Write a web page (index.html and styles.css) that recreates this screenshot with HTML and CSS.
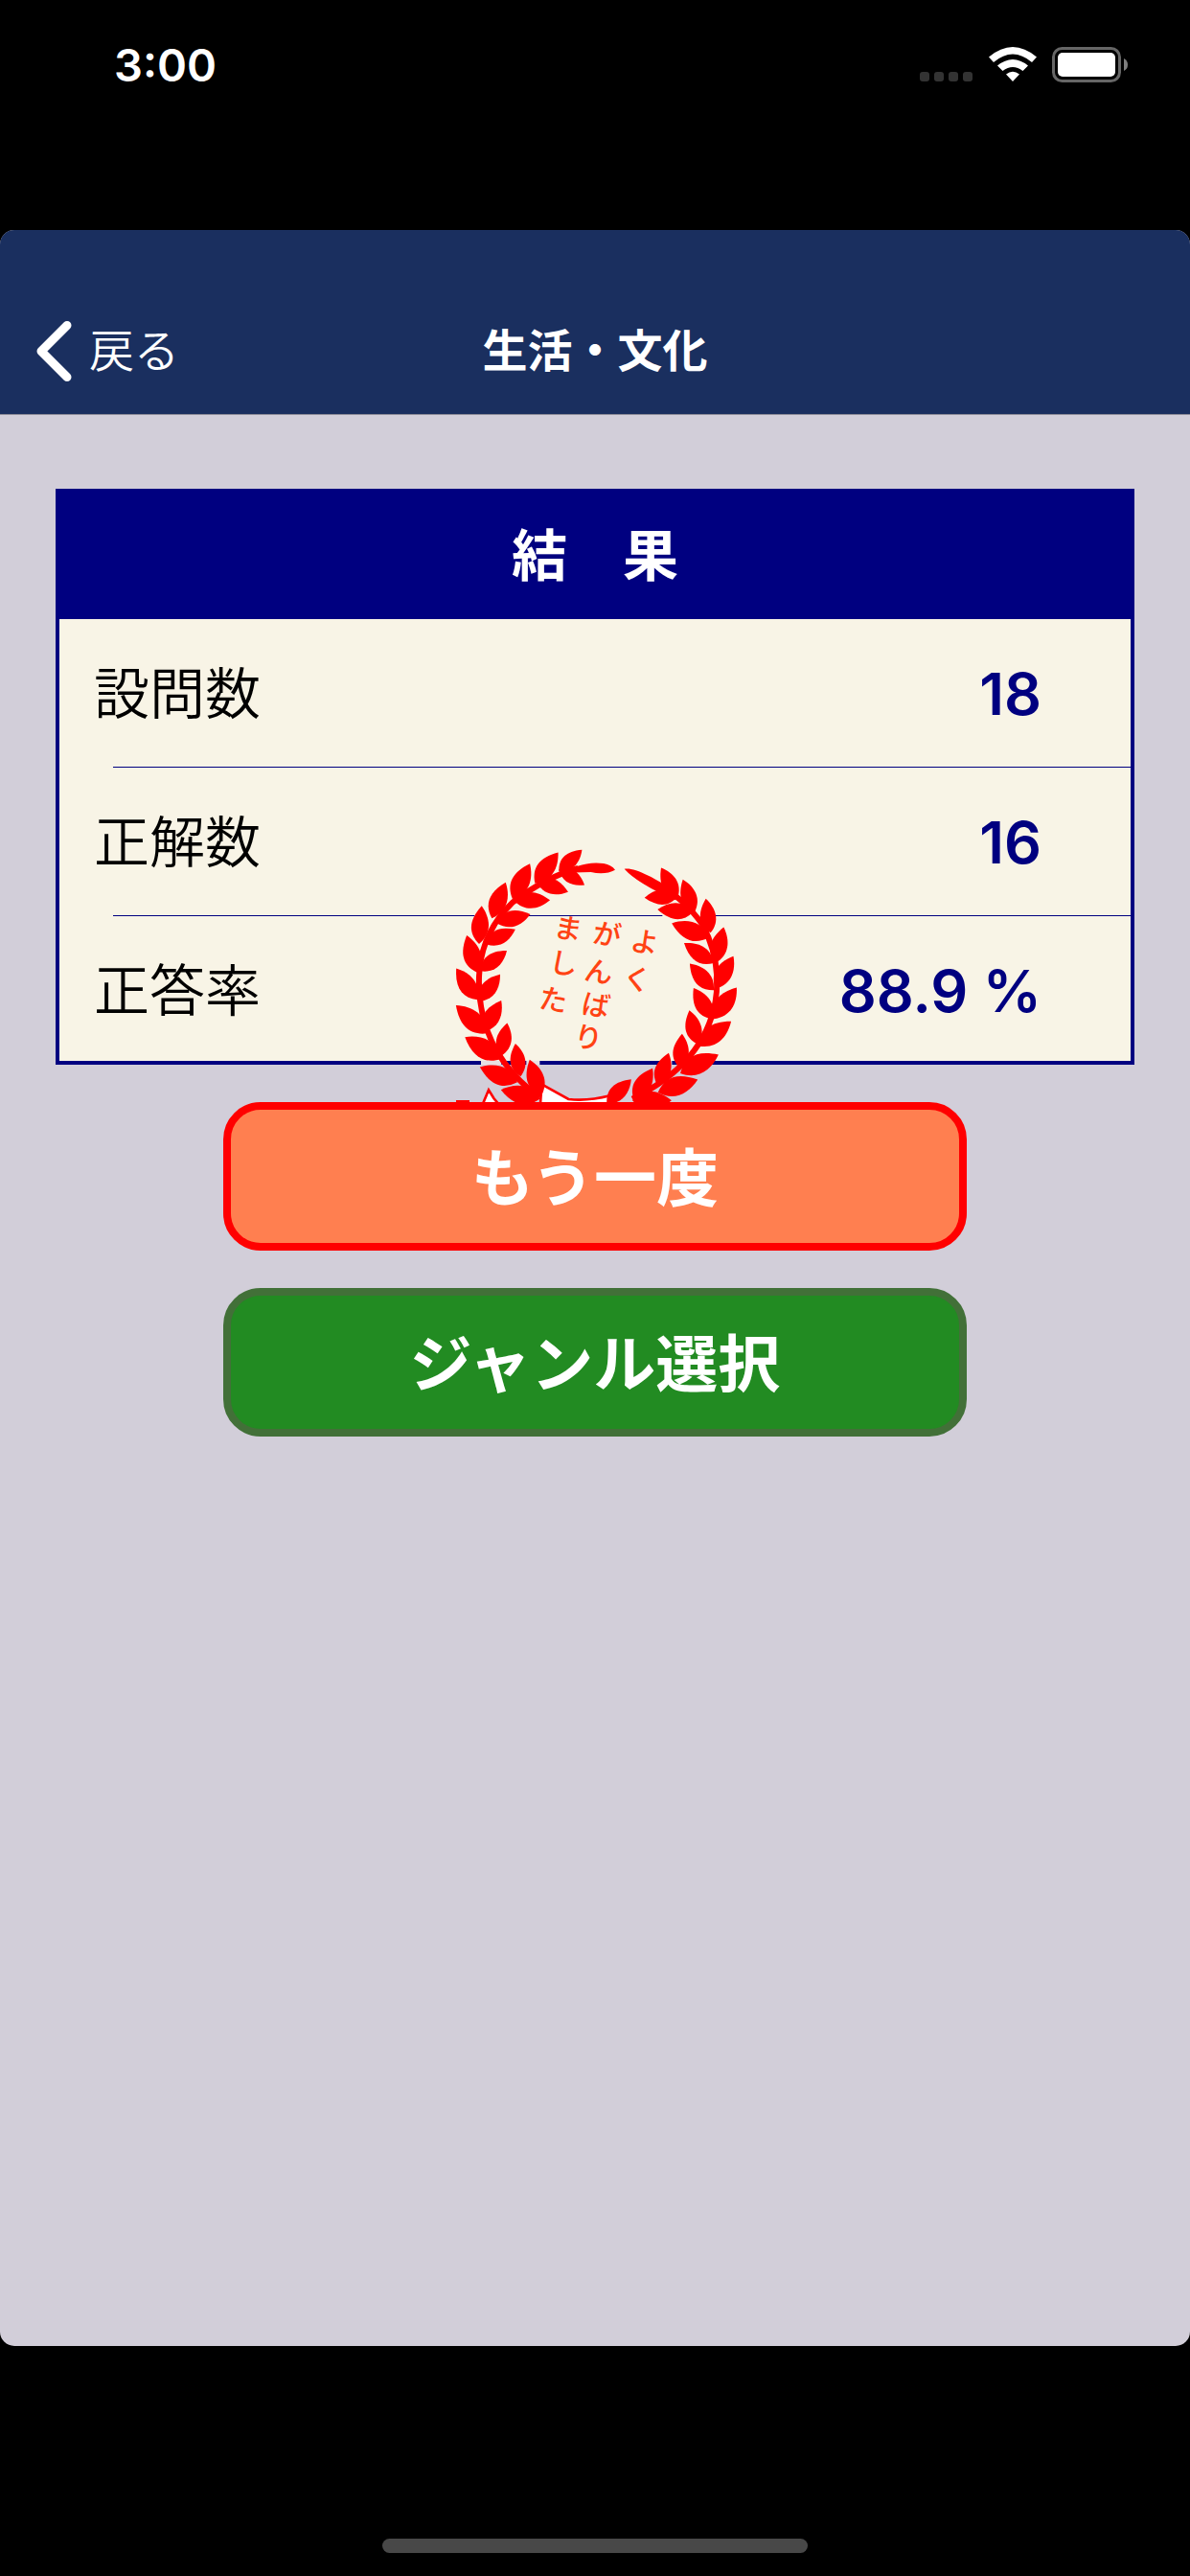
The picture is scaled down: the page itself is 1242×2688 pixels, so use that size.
FILE: index.html
```html
<!DOCTYPE html>
<html lang="ja">
<head>
<meta charset="utf-8">
<meta name="viewport" content="width=device-width, initial-scale=1">
<title>生活・文化</title>
<link rel="stylesheet" href="styles.css">
</head>
<body>
<div class="status">
  <time class="clock">3:00</time>
  <div class="indicators">
    <svg class="signal" width="56" height="11" viewBox="0 0 56 11" aria-hidden="true"><rect width="10" height="10" rx="3"/><rect x="15" width="10" height="10" rx="3"/><rect x="30" width="10" height="10" rx="3"/><rect x="45" width="10" height="10" rx="3"/></svg>
    <svg class="wifi" width="50" height="37" viewBox="0 0 50 37" aria-hidden="true"><path d="M0 10.500Q25-10.500 50 10.500L45 16Q25-1 5 16ZM9 19.500Q25 6.500 41 19.500L35.500 25Q25 17 14.500 25ZM18 28.500Q25 23 32 28.500L25 36Z"/></svg>
    <svg class="battery" width="80" height="37" viewBox="0 0 80 37" aria-hidden="true"><rect class="shell" x="1.500" y="1.500" width="69" height="34" rx="9"/><rect class="charge" x="6" y="6" width="60" height="25" rx="5"/><path class="nub" d="M75 12Q79 14 79 18.500T75 25Z"/></svg>
  </div>
</div>
<div class="app">
  <header class="nav">
    <a class="back" href="#"><svg width="37" height="63" viewBox="0 0 37 63" aria-hidden="true"><path d="M32 4.500L5 31.500L32 58.500"/></svg>戻る</a>
    <h1 class="title">生活・文化</h1>
  </header>
  <main class="content">
    <div class="result">
      <table class="scores">
        <thead><tr><th colspan="2">結　果</th></tr></thead>
        <tbody>
          <tr><th scope="row">設問数</th><td>18</td></tr>
          <tr><th scope="row">正解数</th><td>16</td></tr>
          <tr><th scope="row">正答率</th><td>88.9 %</td></tr>
        </tbody>
      </table>
      <svg class="stamp" width="300" height="265" viewBox="33 45 900 795" role="img" aria-label="よくがんばりました">
        <defs><path id="leaf" d="M0 0C-32-28-33-62 0-104C26-72 34-32 0 0Z"/></defs>
        <path class="gap" d="M106 256H276M694 256H860"/>
        <path class="gap-wide" d="M126 717H190M268 717H310M690 717H724"/>
        <path class="ribbon" d="M316 784L400 831Q460 838 530 820L530 845H312ZM132 845L150 802L166 828L180 845M48 838H90"/>
        <g class="halo">
          <path class="twig" d="M430 108Q330 135 225 215Q115 320 120 475Q125 690 310 825"/>
          <path class="twig" d="M680 160Q760 200 820 285Q880 400 860 525Q825 720 600 830"/>
          <path d="M390 122C410 105 460 85 510 93Q535 98 546 113Q515 130 470 120ZM575 110C605 104 670 138 735 180L735 208Q615 155 575 110Z"/>
          <g>
            <use href="#leaf" transform="translate(370 118) rotate(47) scale(.95)"/>
            <use href="#leaf" transform="translate(295 155) rotate(37) scale(1.160)"/>
            <use href="#leaf" transform="translate(225 205) rotate(26) scale(1.190)"/>
            <use href="#leaf" transform="translate(160 265) rotate(21) scale(1.160)"/>
            <use href="#leaf" transform="translate(120 345) rotate(4) scale(1.150)"/>
            <use href="#leaf" transform="translate(115 435) rotate(-16) scale(1.170)"/>
            <use href="#leaf" transform="translate(115 520) rotate(-34) scale(1.140)"/>
            <use href="#leaf" transform="translate(145 625) rotate(-48) scale(1.260)"/>
            <use href="#leaf" transform="translate(190 705) rotate(-59) scale(1.280)"/>
            <use href="#leaf" transform="translate(240 778) rotate(-68) scale(1.220)"/>
            <use href="#leaf" transform="translate(310 830) rotate(-77) scale(1.200)"/>
            <use href="#leaf" transform="translate(370 112) rotate(121) scale(.9)"/>
            <use href="#leaf" transform="translate(300 150) rotate(108)"/>
            <use href="#leaf" transform="translate(230 210) rotate(89) scale(1.080)"/>
            <use href="#leaf" transform="translate(175 280) rotate(75) scale(1.050)"/>
            <use href="#leaf" transform="translate(140 345) rotate(64)"/>
            <use href="#leaf" transform="translate(125 430) rotate(52)"/>
            <use href="#leaf" transform="translate(120 525) rotate(38) scale(1.030)"/>
            <use href="#leaf" transform="translate(135 620) rotate(29) scale(1.080)"/>
            <use href="#leaf" transform="translate(190 695) rotate(10)"/>
            <use href="#leaf" transform="translate(250 760) rotate(-9)"/>
            <use href="#leaf" transform="translate(315 820) rotate(-18) scale(1.140)"/>
          </g>
          <g>
            <use href="#leaf" transform="translate(742 200) rotate(-29) scale(1.030)"/>
            <use href="#leaf" transform="translate(795 245) rotate(-20) scale(1.040)"/>
            <use href="#leaf" transform="translate(845 310) rotate(-8) scale(1.040)"/>
            <use href="#leaf" transform="translate(860 405) rotate(13) scale(1.110)"/>
            <use href="#leaf" transform="translate(860 485) rotate(29) scale(1.120)"/>
            <use href="#leaf" transform="translate(855 580) rotate(36) scale(1.170)"/>
            <use href="#leaf" transform="translate(810 665) rotate(52) scale(1.210)"/>
            <use href="#leaf" transform="translate(750 750) rotate(64) scale(1.280)"/>
            <use href="#leaf" transform="translate(680 810) rotate(72) scale(1.260)"/>
            <use href="#leaf" transform="translate(600 835) rotate(90) scale(1.180)"/>
            <use href="#leaf" transform="translate(742 195) rotate(-93)"/>
            <use href="#leaf" transform="translate(790 245) rotate(-86) scale(1.070)"/>
            <use href="#leaf" transform="translate(840 325) rotate(-69) scale(1.200)"/>
            <use href="#leaf" transform="translate(855 405) rotate(-56) scale(1.080)"/>
            <use href="#leaf" transform="translate(855 490) rotate(-42) scale(1.080)"/>
            <use href="#leaf" transform="translate(850 580) rotate(-31) scale(1.090)"/>
            <use href="#leaf" transform="translate(805 660) rotate(-14) scale(1.060)"/>
            <use href="#leaf" transform="translate(750 735) rotate(3) scale(1.050)"/>
            <use href="#leaf" transform="translate(680 790) rotate(18) scale(1.050)"/>
            <use href="#leaf" transform="translate(605 835) rotate(30) scale(1.120)"/>
            <use href="#leaf" transform="translate(520 845) rotate(45) scale(1.040)"/>
          </g>
        </g>
        <g class="praise">
          <text x="590 566" y="363 479" rotate="10">よく</text>
          <text x="472 446 437 413" y="339 455 560 662" rotate="10">がんばり</text>
          <text x="350 336 304" y="320 430 544" rotate="10">ました</text>
        </g>
      </svg>
    </div>
    <div class="actions">
      <button class="action retry" type="button">もう一度</button>
      <button class="action genre" type="button">ジャンル選択</button>
    </div>
  </main>
</div>
<div class="home"><span class="home-bar"></span></div>
</body>
</html>
```
FILE: styles.css
```css
* { box-sizing: border-box; }

body {
  margin: 0;
  min-height: 100vh;
  display: flex;
  flex-direction: column;
  background: #000;
  color: #000;
  font-family: Inter, "Noto Sans CJK JP", sans-serif;
}

svg { display: block; }

/* Status bar */
.status {
  height: 240px;
  padding: 40px 64px 0 119px;
  display: flex;
  justify-content: space-between;
  align-items: flex-start;
  color: #fff;
}
.clock { font-size: 47px; line-height: 56px; font-weight: 600; }
.indicators { display: flex; align-items: flex-end; gap: 16px; padding-top: 9px; }
.signal { fill: #333; }
.wifi { fill: #fff; }
.shell { fill: none; stroke: #666; stroke-width: 3; }
.charge { fill: #fff; }
.nub { fill: #808080; }

/* Presented sheet */
.app {
  flex: 1;
  border-radius: 15px;
  overflow: hidden;
  background: #d2ced9;
}
.nav {
  height: 193px;
  padding: 60px 38px 0;
  display: grid;
  grid-template-columns: 1fr auto 1fr;
  align-items: center;
  background: #1a2f5f;
  border-bottom: 1px solid #8d8c98;
  color: #fff;
  font-size: 47px;
  line-height: 64px;
}
.back {
  display: flex;
  align-items: center;
  gap: 18px;
  color: inherit;
  font-weight: 350;
  text-decoration: none;
}
.back path {
  fill: none;
  stroke: #fff;
  stroke-width: 9;
  stroke-linecap: round;
  stroke-linejoin: round;
}
.title { margin: 0; font-size: inherit; font-weight: 600; }

.content { padding: 77px 58px 0; }
.result { position: relative; }

/* Score table */
.scores {
  width: 100%;
  border: 4px solid #000080;
  border-spacing: 0;
  background: #f8f4e6;
  font-size: 58px;
  line-height: 80px;
}
.scores th, .scores td { padding: 0; }
.scores thead th {
  height: 132px;
  background: #000080;
  color: #fff;
  font-weight: 600;
}
.scores tbody th, .scores tbody td {
  height: 155px;
  background: linear-gradient(#000080, #000080) right bottom / 100% 1px no-repeat;
}
.scores tbody th {
  padding-left: 36px;
  background-size: calc(100% - 56px) 1px;
  font-weight: 350;
  text-align: left;
}
.scores tbody td {
  padding-right: 93px;
  color: #000080;
  font-size: 61px;
  font-weight: 600;
  text-align: right;
}
.scores tbody tr:last-child > * { height: 151px; padding-top: 4px; background: none; }

/* Laurel stamp lying over the table */
.stamp {
  position: absolute;
  top: 375px;
  left: calc(50% - 150px);
}
.halo { fill: #f00; }
.twig { fill: none; stroke: #f00; stroke-width: 18; }
.gap { stroke: #f8f4e6; stroke-width: 6; }
.gap-wide { stroke: #e8dfe2; stroke-width: 14; }
.ribbon { fill: #fff; stroke: #f00; stroke-width: 8; }
.praise {
  fill: #ff4314;
  font-family: "Noto Sans CJK JP", sans-serif;
  font-size: 88px;
  font-weight: 500;
}

/* Buttons */
.actions {
  position: relative;
  max-width: 776px;
  margin: 39px auto 0;
  display: grid;
  gap: 39px;
}
.action {
  height: 155px;
  padding: 0 0 6px;
  border: 8px solid;
  border-radius: 39px;
  color: #fff;
  font-family: inherit;
  font-size: 65px;
  font-weight: 600;
}
.retry { background: #ff7f50; border-color: #f00; }
.genre { background: #228b22; border-color: #427038; }

/* Home indicator */
.home {
  height: 240px;
  padding-bottom: 24px;
  display: flex;
  justify-content: center;
  align-items: flex-end;
}
.home-bar { width: 444px; height: 15px; border-radius: 8px; background: #484848; }
```
